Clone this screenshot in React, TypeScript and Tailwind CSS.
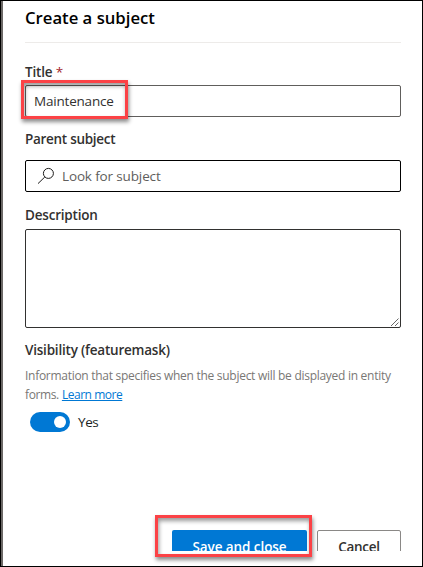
import React from "react";

function SearchIcon() {
  return (
    <svg width="18" height="18" viewBox="0 0 18 18" fill="none" stroke="#1b1a19" strokeWidth="1" className="shrink-0">
      <circle cx="11.4" cy="6.4" r="5" />
      <path d="M7.8 10 1 16.6" />
    </svg>
  );
}

function Highlight({ className }: { className: string }) {
  return (
    <div
      className={`pointer-events-none absolute border-3 border-[#fb4246] shadow-[1px_3px_4px_rgba(0,0,0,0.45),inset_1px_3px_4px_rgba(0,0,0,0.4)] ${className}`}
    />
  );
}

export default function App() {
  return (
    <div className="relative flex h-[567px] w-[423px] overflow-hidden border border-black bg-white font-['Open_Sans','Noto_Sans',sans-serif] text-[13.5px] text-[#323130]">
      <div className="w-[2px] shrink-0 bg-[#6b6866]" />
      <main className="flex w-[398px] flex-col pl-[22px]">
        <header className="flex h-[42px] shrink-0 items-start border-b border-[#edebe9] pt-[5px]">
          <h1 className="text-[16.7px] leading-6 font-semibold whitespace-nowrap text-black">Create a subject</h1>
        </header>

        <label className="mt-[19px] h-[23px] shrink-0 leading-5 font-semibold">
          <span className="tracking-[-0.2px]">Title</span> <span className="font-normal text-[#a4262c]">*</span>
        </label>
        <div className="relative flex h-8 shrink-0 items-center rounded-[2px] border border-[#605e5c] pl-[8px]">
          <span className="tracking-[-0.2px]">Maintenance</span>
          <Highlight className="-top-[6px] -left-[5px] h-[39px] w-[107px]" />
        </div>

        <label className="mt-[12px] h-[31px] shrink-0 leading-5 font-semibold tracking-[-0.29px]">Parent subject</label>
        <div className="flex h-8 shrink-0 items-center gap-[7px] rounded-[2px] border border-black pl-[11px] text-[#605e5c]">
          <SearchIcon />
          <span className="tracking-[-0.14px]">Look for subject</span>
        </div>

        <label className="mt-[13px] h-[24px] shrink-0 leading-5 font-semibold tracking-[-0.2px]">Description</label>
        <div className="flex h-[99px] shrink-0 items-end justify-end rounded-[2px] border border-[#323130]">
          <svg width="10" height="10" viewBox="0 0 10 10" stroke="#555" strokeWidth="0.9">
            <path d="M1 9 8.5 1.5M5 9 8.5 5.5" />
          </svg>
        </div>

        <h2 className="mt-[12px] h-[26px] shrink-0 leading-5 font-semibold tracking-[-0.21px]">Visibility (featuremask)</h2>
        <p className="text-[12px] leading-[19px] whitespace-nowrap text-[#797775]">
          <span className="tracking-[-0.28px]">Information that specifies when the subject will be displayed in entity</span>
          <br />
          <span className="tracking-[-0.4px]">forms.</span>{" "}
          <a className="tracking-[-0.46px] text-[#0078d4] underline underline-offset-1">Learn more</a>
        </p>

        <div className="mt-[8px] flex h-5 shrink-0 items-center gap-2 pl-[5px]">
          <div className="flex h-5 w-10 items-center justify-end rounded-full bg-[#0078d4] pr-1">
            <div className="size-3 rounded-full bg-white" />
          </div>
          <span className="tracking-[-0.4px] text-[#201f1e]">Yes</span>
        </div>

        <footer className="mt-[98px] flex h-[21px] shrink-0 items-start justify-end gap-[10px] overflow-hidden leading-5">
          <button className="h-8 w-[135px] shrink-0 rounded-[2px] bg-[#0078d4] pt-px font-semibold tracking-[-0.08px] text-white">
            Save and close
          </button>
          <button className="h-8 w-[84px] shrink-0 rounded-[2px] border border-[#8a8886] pt-px font-semibold tracking-[-0.25px]">
            Cancel
          </button>
        </footer>
      </main>
      <Highlight className="top-[514px] left-[154px] h-[42px] w-[157px]" />
    </div>
  );
}
